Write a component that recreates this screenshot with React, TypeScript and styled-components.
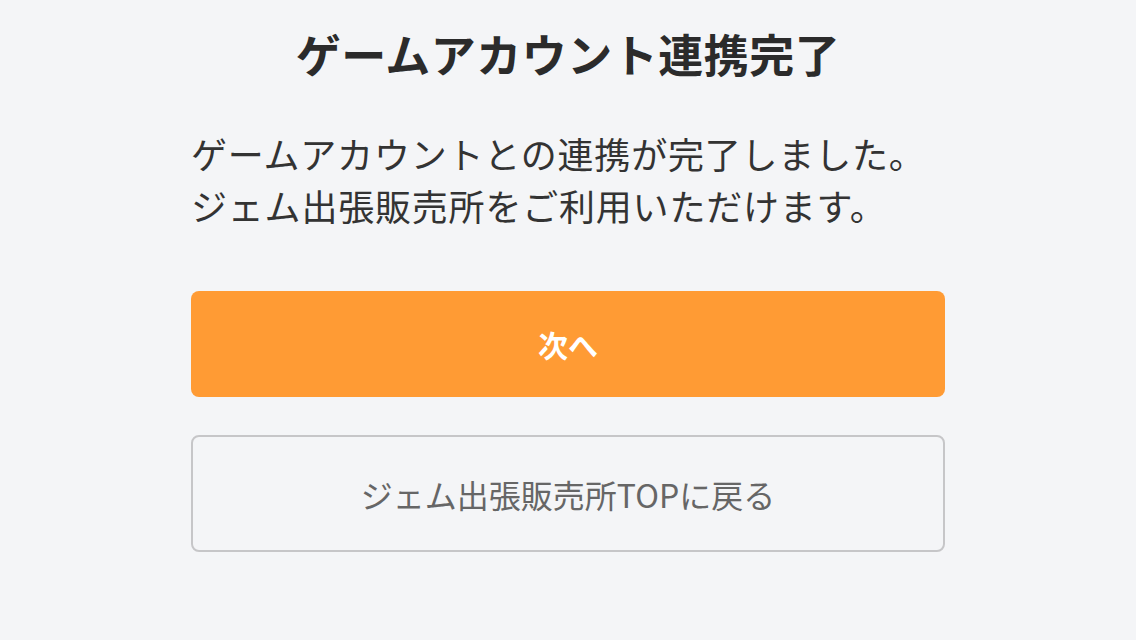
import styled, { createGlobalStyle } from "styled-components";

const GlobalStyle = createGlobalStyle`
  html, body {
    margin: 0;
    padding: 0;
    background-color: #f4f5f7;
  }
  body {
    font-family: "Noto Sans CJK JP", "Noto Sans", sans-serif;
  }
`;

export default function App() {
  return (
    <>
      <GlobalStyle />
      <Page>
        <Title>ゲームアカウント連携完了</Title>
        <Message>
          ゲームアカウントとの連携が完了しました。
          <br />
          ジェム出張販売所をご利用いただけます。
        </Message>
        <Actions>
          <Button variant="primary">次へ</Button>
          <Button variant="outline">ジェム出張販売所TOPに戻る</Button>
        </Actions>
      </Page>
    </>
  );
}

const Page = styled.main`
  width: 754px;
  margin: 0 auto;
  padding-top: 23px;
  display: flex;
  flex-direction: column;
`;

const Title = styled.h1`
  margin: 0;
  text-align: center;
  font-size: 45px;
  letter-spacing: 0.5px;
  line-height: 62px;
  font-weight: 700;
  color: #2b2b2b;
`;

const Message = styled.p`
  margin: 42px 0 0;
  font-size: 36px;
  letter-spacing: 0.8px;
  line-height: 52px;
  font-weight: 400;
  color: #333333;
`;

const Actions = styled.div`
  margin-top: 60px;
  display: flex;
  flex-direction: column;
  gap: 38px;
`;

const Button = styled.button<ButtonProps>`
  display: flex;
  align-items: center;
  justify-content: center;
  width: 100%;
  box-sizing: border-box;
  border-radius: 8px;
  font-family: inherit;
  cursor: pointer;
  height: ${(props) => (props.variant === "primary" ? "106px" : "117px")};
  background-color: ${(props) =>
    props.variant === "primary" ? "#ff9b34" : "#f4f5f7"};
  border: ${(props) =>
    props.variant === "primary" ? "none" : "2px solid #c6c6c8"};
  color: ${(props) => (props.variant === "primary" ? "#ffffff" : "#666666")};
  font-size: ${(props) => (props.variant === "primary" ? "30px" : "32px")};
  font-weight: ${(props) => (props.variant === "primary" ? 700 : 400)};
`;

type ButtonProps = {
  variant: "primary" | "outline";
};
